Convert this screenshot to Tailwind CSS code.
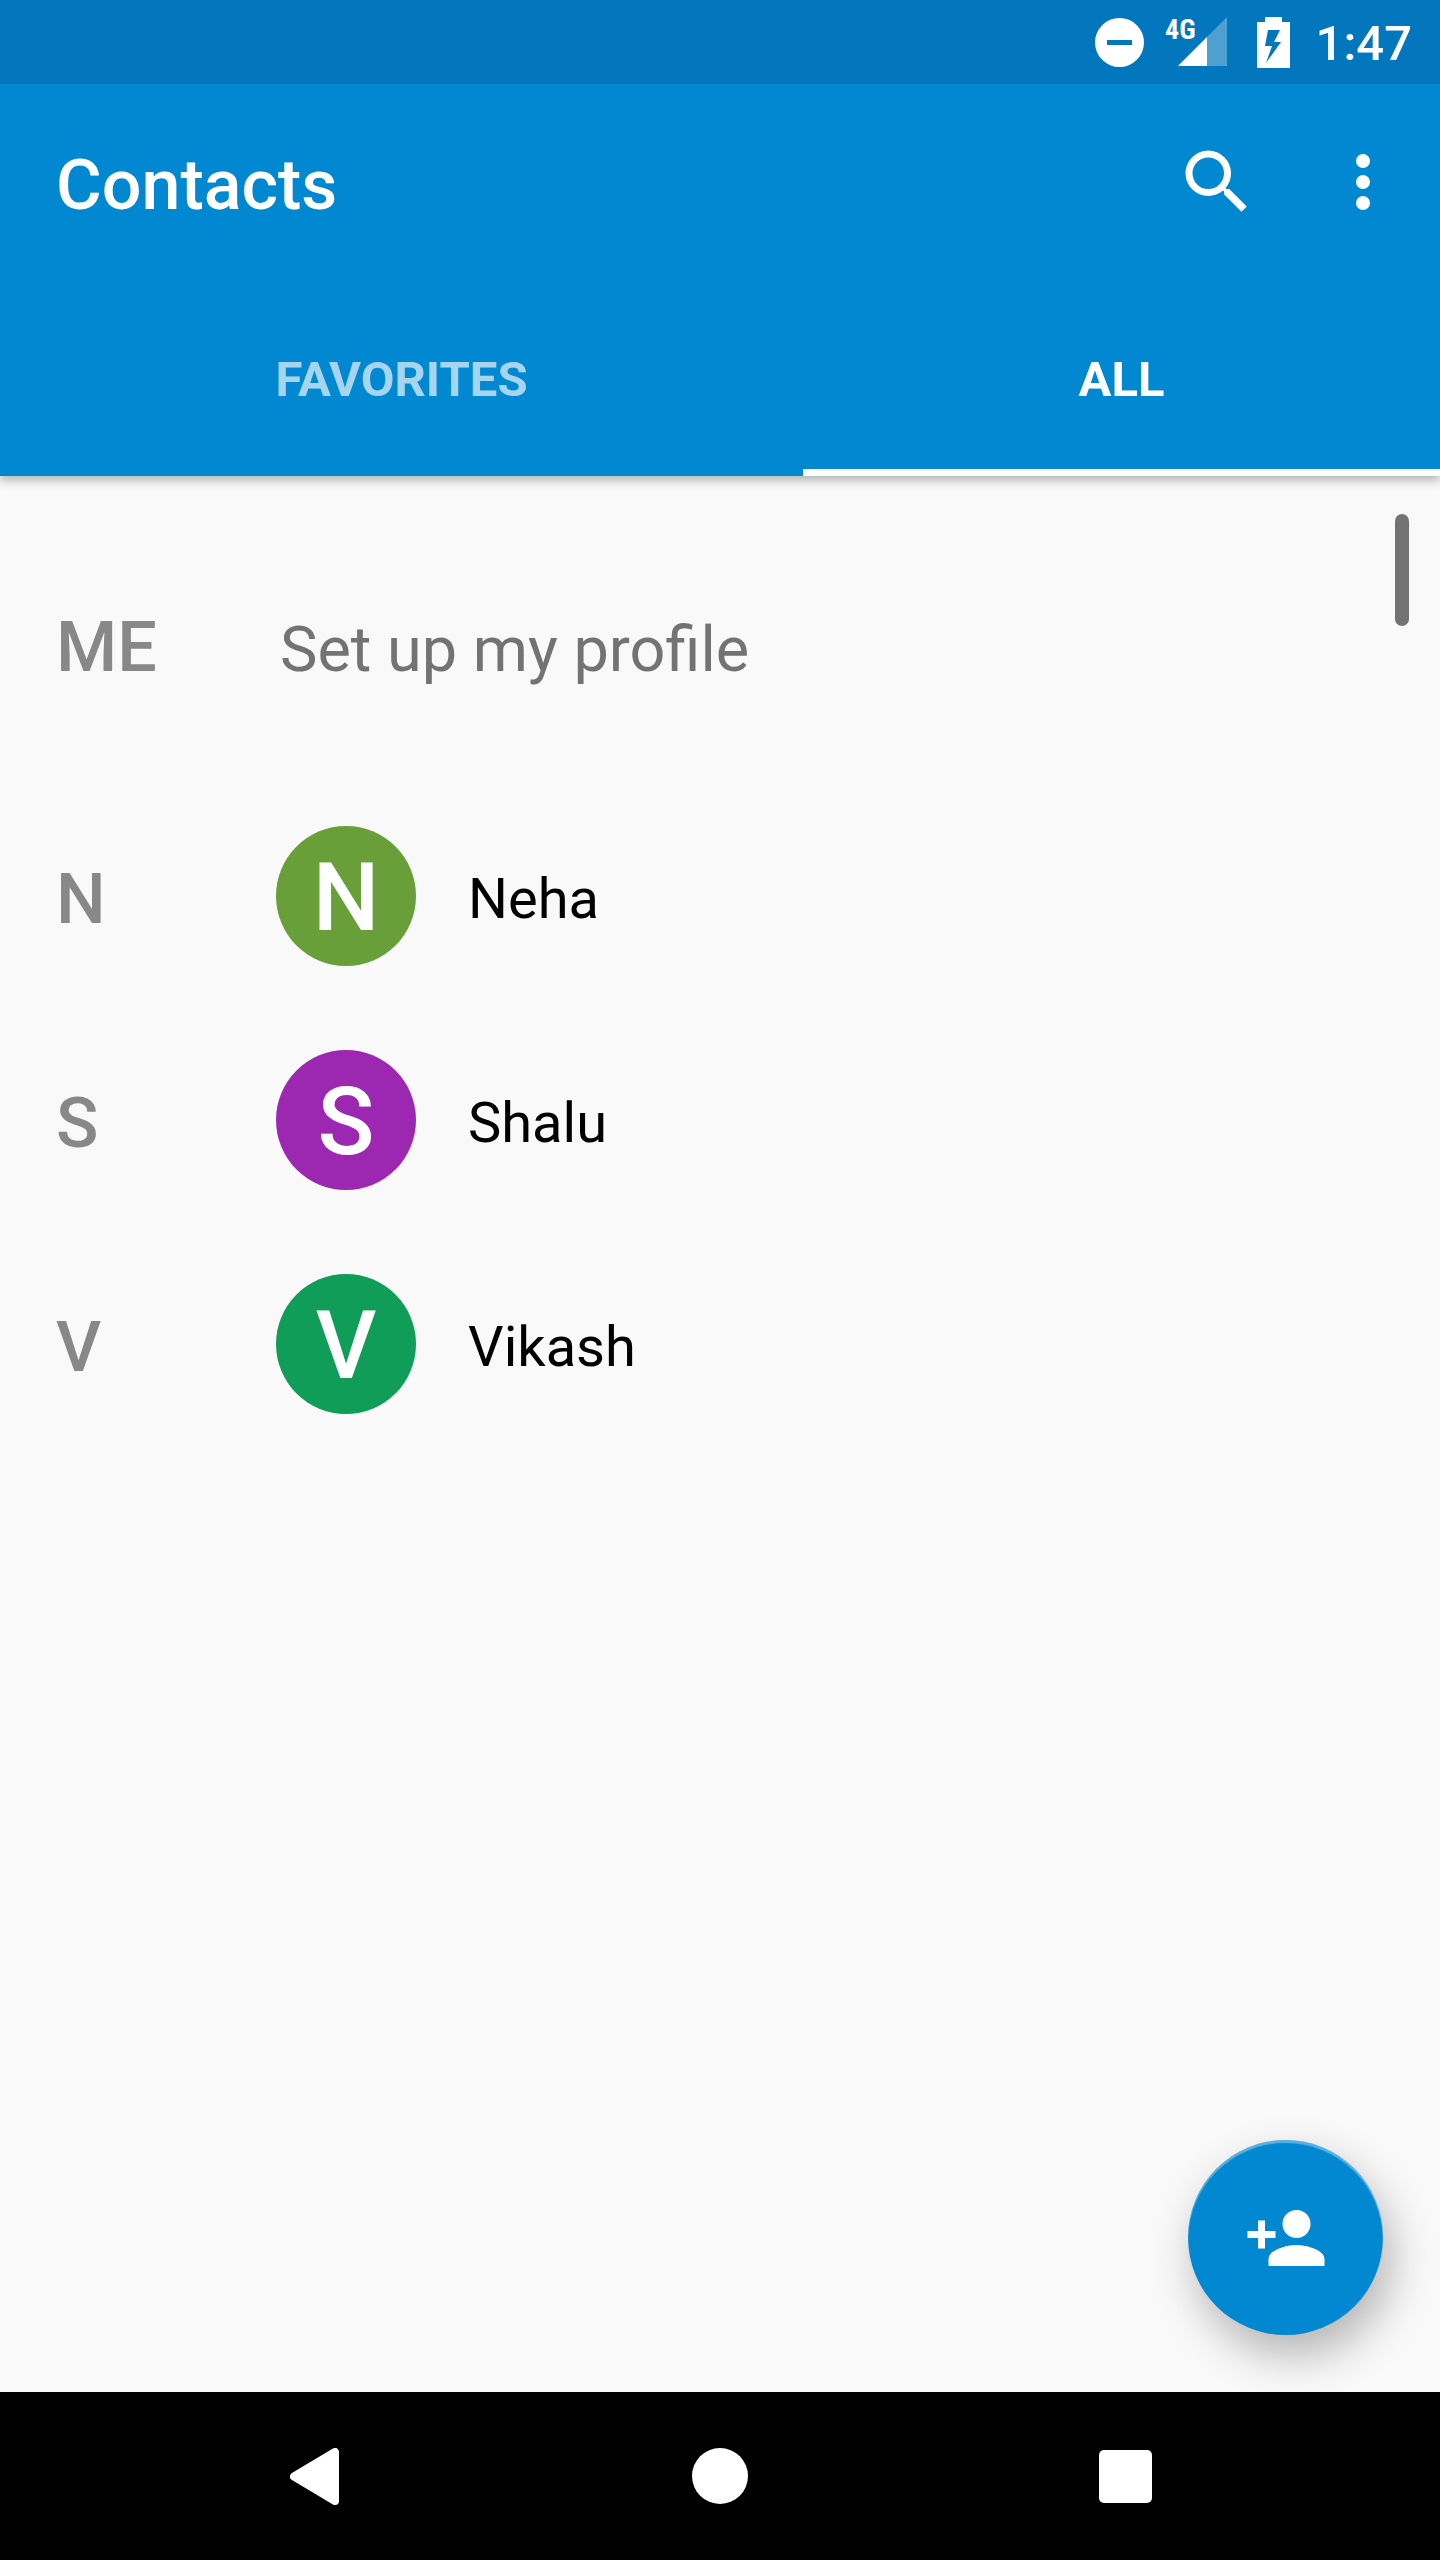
<!DOCTYPE html>
<html lang="en">
<head>
<meta charset="utf-8">
<meta name="viewport" content="width=device-width, initial-scale=1">
<title>Contacts</title>
<script src="https://cdn.jsdelivr.net/npm/@tailwindcss/browser@4"></script>
</head>
<body class="flex min-h-screen flex-col bg-[#f9f9f9] font-[Roboto,sans-serif]">

  <!-- System status bar -->
  <div class="relative z-20 flex h-[84px] items-center justify-end bg-[#0277bd] pr-7 text-white">
    <svg class="size-[49px]" viewBox="0 0 49 49" aria-label="Do not disturb">
      <circle cx="24.5" cy="24.5" r="24.5" fill="#fff"/>
      <rect x="12" y="22" width="25" height="5" fill="#0277bd"/>
    </svg>
    <svg class="ml-4 h-[62px] w-[67px]" viewBox="0 0 67 62" aria-label="4G signal">
      <path d="M18 55 67 6v49z" fill="#fff" fill-opacity=".3"/>
      <path d="M18 55 47 26v29z" fill="#fff"/>
      <text x="5" y="28" fill="#fff" class="font-['Roboto_Condensed','Liberation_Sans_Narrow',sans-serif] text-[28px] font-bold">4G</text>
    </svg>
    <svg class="ml-[30px] h-[51px] w-[33px]" viewBox="0 0 33 51" aria-label="Battery charging">
      <path fill="#fff" fill-rule="evenodd" d="M8 0h17v5h8v46H0V5h8zM11 13 8 29h7L9 46 24 25h-7l6-12z"/>
    </svg>
    <time class="ml-[26px] pt-1 text-[49px] leading-[58px] font-medium">1:47</time>
  </div>

  <!-- App bar with tabs -->
  <header class="relative z-10 bg-[#0288d1] text-white shadow-[0_4px_10px_rgba(0,0,0,0.3)]">
    <div class="flex h-[196px] items-center pr-3.5 pl-14">
      <h1 class="flex-1 pt-1.5 text-[70px] leading-[82px] font-medium">Contacts</h1>
      <button type="button" aria-label="Search" class="flex h-42 w-[166px] items-center justify-center">
        <svg class="size-21" viewBox="0 0 24 24" fill="currentColor"><path d="M15.5 14h-.79l-.28-.27A6.47 6.47 0 0 0 16 9.5 6.5 6.5 0 1 0 9.5 16c1.61 0 3.09-.59 4.23-1.57l.27.28v.79l5 4.99L20.49 19l-4.99-5zm-6 0a4.5 4.5 0 1 1 0-9 4.5 4.5 0 0 1 0 9z"/></svg>
      </button>
      <button type="button" aria-label="More options" class="flex h-42 w-[126px] items-center justify-center">
        <svg class="size-21" viewBox="0 0 24 24" fill="currentColor"><circle cx="12" cy="6" r="2"/><circle cx="12" cy="12" r="2"/><circle cx="12" cy="18" r="2"/></svg>
      </button>
    </div>
    <div role="tablist" class="flex h-[196px] text-[49px] leading-[58px] font-bold">
      <button type="button" role="tab" aria-selected="false" class="flex-auto border-b-[7px] border-transparent pt-2.5 text-white/65">FAVORITES</button>
      <button type="button" role="tab" aria-selected="true" class="flex-auto border-b-[7px] border-white pt-2.5">ALL</button>
    </div>
  </header>

  <main class="relative flex-1">
    <div class="flex items-baseline pt-[130px] pb-[93px] pl-14">
      <h2 class="w-56 text-[70px] leading-[82px] font-medium text-[#888]">ME</h2>
      <a href="#" class="text-[63px] leading-[82px] text-[#737373]">Set up my profile</a>
    </div>
    <ul>
      <li class="flex h-56 items-center pl-14">
        <h2 class="w-55 pt-1.5 text-[70px] leading-[82px] font-medium text-[#888]">N</h2>
        <a href="#" class="flex flex-1 items-center gap-13">
          <span class="flex size-35 items-center justify-center rounded-full bg-[#689f38] pt-1 text-[94px] leading-none font-medium text-white">N</span>
          <span class="pt-1.5 text-[56px] leading-[66px] text-black">Neha</span>
        </a>
      </li>
      <li class="flex h-56 items-center pl-14">
        <h2 class="w-55 pt-1.5 text-[70px] leading-[82px] font-medium text-[#888]">S</h2>
        <a href="#" class="flex flex-1 items-center gap-13">
          <span class="flex size-35 items-center justify-center rounded-full bg-[#9c27b0] pt-1 text-[94px] leading-none font-medium text-white">S</span>
          <span class="pt-1.5 text-[56px] leading-[66px] text-black">Shalu</span>
        </a>
      </li>
      <li class="flex h-56 items-center pl-14">
        <h2 class="w-55 pt-1.5 text-[70px] leading-[82px] font-medium text-[#888]">V</h2>
        <a href="#" class="flex flex-1 items-center gap-13">
          <span class="flex size-35 items-center justify-center rounded-full bg-[#0f9d58] pt-1 text-[94px] leading-none font-medium text-white">V</span>
          <span class="pt-1.5 text-[56px] leading-[66px] text-black">Vikash</span>
        </a>
      </li>
    </ul>

    <!-- Scroll thumb and floating action button lie over the list -->
    <div class="absolute top-[38px] right-[31px] h-28 w-3.5 rounded-full bg-[#737373]"></div>
    <button type="button" aria-label="Add contact" class="absolute right-[57px] bottom-[57px] flex size-[195px] items-center justify-center rounded-full bg-[#0288d1] text-white shadow-[inset_0_3px_1px_rgba(255,255,255,0.35),8px_20px_44px_rgba(0,0,0,0.28)]">
      <svg class="size-21" viewBox="0 0 24 24" fill="currentColor"><path d="M15 12a4 4 0 1 0 0-8 4 4 0 0 0 0 8zm-9-2V7H4v3H1v2h3v3h2v-3h3v-2H6zm9 4c-2.67 0-8 1.34-8 4v2h16v-2c0-2.66-5.33-4-8-4z"/></svg>
    </button>
  </main>

  <!-- System navigation bar -->
  <nav class="relative z-10 grid h-[168px] grid-cols-3 bg-black px-28" aria-label="System">
    <button type="button" aria-label="Back" class="flex items-center justify-center">
      <svg class="h-[57px] w-[49px]" viewBox="0 0 49 57"><path d="M4 28.500 45 4v49z" fill="#fff" stroke="#fff" stroke-width="8" stroke-linejoin="round"/></svg>
    </button>
    <button type="button" aria-label="Home" class="flex items-center justify-center">
      <span class="size-14 rounded-full bg-white"></span>
    </button>
    <button type="button" aria-label="Recent apps" class="flex items-center justify-center">
      <span class="size-[53px] rounded-[5px] bg-white"></span>
    </button>
  </nav>
</body>
</html>
